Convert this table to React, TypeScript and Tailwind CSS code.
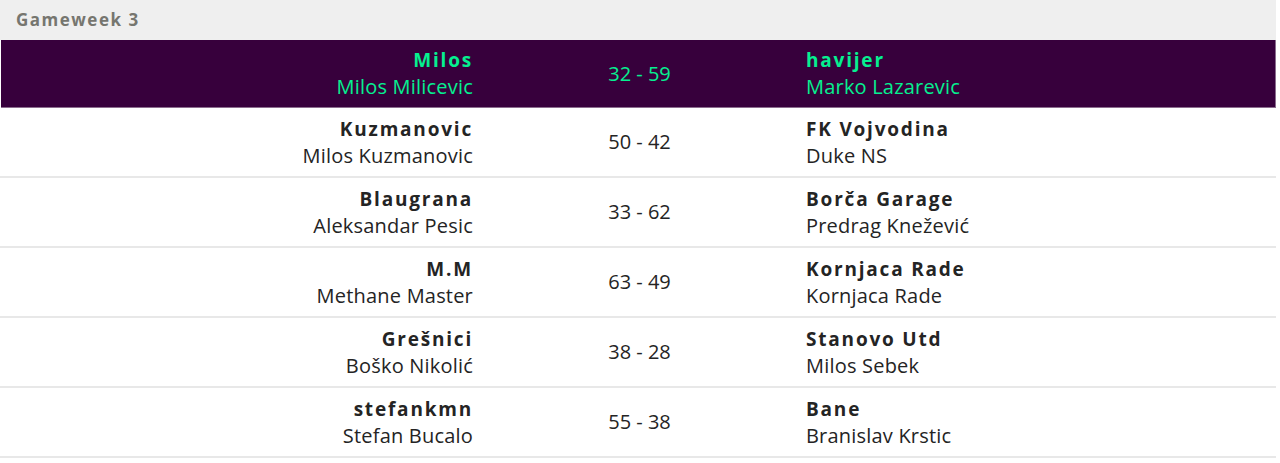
const fixtures = [
  { home: "Milos", homeManager: "Milos Milicevic", score: "32 - 59", away: "havijer", awayManager: "Marko Lazarevic", mine: true },
  { home: "Kuzmanovic", homeManager: "Milos Kuzmanovic", score: "50 - 42", away: "FK Vojvodina", awayManager: "Duke NS" },
  { home: "Blaugrana", homeManager: "Aleksandar Pesic", score: "33 - 62", away: "Borča Garage", awayManager: "Predrag Knežević" },
  { home: "M.M", homeManager: "Methane Master", score: "63 - 49", away: "Kornjaca Rade", awayManager: "Kornjaca Rade" },
  { home: "Grešnici", homeManager: "Boško Nikolić", score: "38 - 28", away: "Stanovo Utd", awayManager: "Milos Sebek" },
  { home: "stefankmn", homeManager: "Stefan Bucalo", score: "55 - 38", away: "Bane", awayManager: "Branislav Krstic" },
]

export default function App() {
  return (
    <div
      className="w-[1276px] bg-white"
      style={{ fontFamily: '"Open Sans", "Liberation Sans", sans-serif' }}
    >
      <div className="flex h-10 items-center bg-[#efefef] px-4">
        <h2 className="text-[17px] font-bold tracking-[1.5px] text-[#76766f]">
          Gameweek 3
        </h2>
      </div>

      {fixtures.map((f) => (
        <div
          key={f.home}
          className={
            f.mine
              ? "ml-px grid h-[68px] grid-cols-[482px_313px_1fr] items-center border-r border-b border-[#8b6d8e] bg-[#37003c] text-[#05f090]"
              : "grid h-[70px] grid-cols-[483px_313px_1fr] items-center border-b-2 border-[#e8e8e8] text-[#242424]"
          }
        >
          <div className="pr-[10px] text-right text-[20px]">
            <div className="text-[19px] leading-[26px] font-bold tracking-[1.8px]">{f.home}</div>
            <div className="leading-[27px] tracking-[0.2px]">{f.homeManager}</div>
          </div>
          <div className="text-center text-[20px]">{f.score}</div>
          <div className="pl-[10px] text-left text-[20px]">
            <div className="text-[19px] leading-[26px] font-bold tracking-[1.8px]">{f.away}</div>
            <div className="leading-[27px] tracking-[0.2px]">{f.awayManager}</div>
          </div>
        </div>
      ))}
    </div>
  )
}
